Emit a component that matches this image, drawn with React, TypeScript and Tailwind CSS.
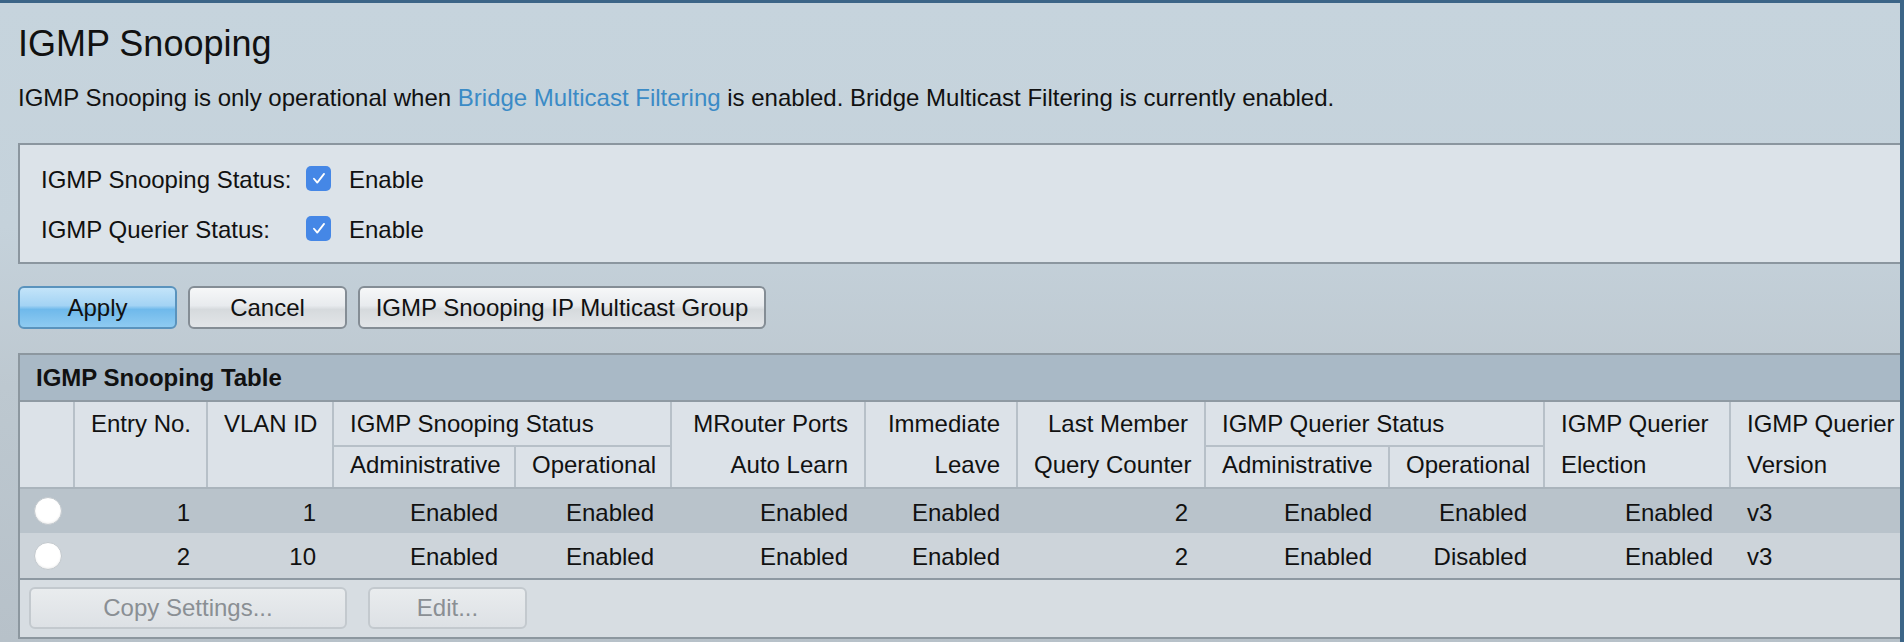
import type { ReactNode } from 'react'

const COLS = 'grid-cols-[53px_131px_124px_180px_154px_192px_150px_186px_182px_153px_184px_200px]'
const HEAD = 'whitespace-nowrap bg-[#dce2e8] px-4'

type Row = {
  entry: string
  vlan: string
  snoopAdmin: string
  snoopOper: string
  mrouter: string
  immediate: string
  lastMember: string
  querierAdmin: string
  querierOper: string
  election: string
  version: string
}

const ROWS: Row[] = [
  {
    entry: '1',
    vlan: '1',
    snoopAdmin: 'Enabled',
    snoopOper: 'Enabled',
    mrouter: 'Enabled',
    immediate: 'Enabled',
    lastMember: '2',
    querierAdmin: 'Enabled',
    querierOper: 'Enabled',
    election: 'Enabled',
    version: 'v3',
  },
  {
    entry: '2',
    vlan: '10',
    snoopAdmin: 'Enabled',
    snoopOper: 'Enabled',
    mrouter: 'Enabled',
    immediate: 'Enabled',
    lastMember: '2',
    querierAdmin: 'Enabled',
    querierOper: 'Disabled',
    election: 'Enabled',
    version: 'v3',
  },
]

function Checkbox() {
  return (
    <span className="flex h-[25px] w-[25px] items-center justify-center rounded-[5px] bg-[#4587e6]">
      <svg viewBox="0 0 24 24" className="h-[22px] w-[22px]" fill="none">
        <path d="M6.5 12.8l3.6 4.2L17.5 7.5" stroke="white" strokeWidth="2" strokeLinecap="round" strokeLinejoin="round" />
      </svg>
    </span>
  )
}

function StatusRow({ label }: { label: string }) {
  return (
    <div className="flex h-[50px] items-center pl-[21px]">
      <span className="w-[265px] pt-[3px]">{label}</span>
      <Checkbox />
      <span className="ml-[18px] pt-[3px]">Enable</span>
    </div>
  )
}

function Button({ children, primary = false, className = '' }: { children: ReactNode; primary?: boolean; className?: string }) {
  return (
    <button
      className={`h-[43px] rounded-[6px] border-2 text-[24px] leading-none text-[#111] ${
        primary
          ? 'border-[#5a93bd] bg-[linear-gradient(to_bottom,#c3e4f9_0%,#a3d3f4_45%,#6fb9eb_55%,#8fcbf1_100%)]'
          : 'border-[#848d95] bg-[linear-gradient(to_bottom,#f6f7f8_0%,#e8ebee_45%,#d6dadd_55%,#e2e5e8_100%)]'
      } ${className}`}
    >
      {children}
    </button>
  )
}

function DisabledButton({ children, className = '' }: { children: ReactNode; className?: string }) {
  return (
    <button
      disabled
      className={`h-[42px] rounded-[6px] border-2 border-[#c3c9ce] bg-[linear-gradient(to_bottom,#e9ecee,#dde1e5)] text-[24px] leading-none text-[#8a8f94] ${className}`}
    >
      {children}
    </button>
  )
}

function Radio() {
  return <span className="block h-[28px] w-[28px] rounded-full border border-[#c2c8cd] bg-white shadow-[inset_0_-1px_2px_rgba(0,0,0,0.08)]" />
}

export default function App() {
  return (
    <div className="h-[642px] w-full overflow-hidden border-t-[3px] border-r-[4px] border-[#3c6587] bg-[linear-gradient(180deg,#c6d4dd_0%,#c5d2db_35%,#bdc8d0_60%,#b7c1c9_100%)] pl-[18px] pt-[20px] font-['Liberation_Sans',Arial,Helvetica,sans-serif] text-[#111]">
      <h1 className="text-[36px] leading-[42px]">IGMP Snooping</h1>
      <p className="mt-[19px] text-[24px] leading-[28px]">
        IGMP Snooping is only operational when <span className="text-[#3b8bc6]">Bridge Multicast Filtering</span> is enabled.
        Bridge Multicast Filtering is currently enabled.
      </p>

      <div className="mt-[31px] border-y-2 border-l-2 border-[#8b969f] bg-[#dce3e9] pb-[9px] pt-[8px] text-[24px] leading-[28px]">
        <StatusRow label="IGMP Snooping Status:" />
        <StatusRow label="IGMP Querier Status:" />
      </div>

      <div className="mt-[22px] flex gap-[11px]">
        <Button primary className="w-[159px]">
          Apply
        </Button>
        <Button className="w-[159px]">Cancel</Button>
        <Button className="w-[408px]">IGMP Snooping IP Multicast Group</Button>
      </div>

      <div className="mt-[24px] w-[1913px] border-2 border-[#8c979f] text-[24px]">
        <div className="flex h-[47px] items-center border-b-2 border-[#8f9aa3] bg-[#a9b9c6] pl-4 font-bold leading-[28px]">
          IGMP Snooping Table
        </div>

        <div className={`grid ${COLS} h-[87px] grid-rows-[43px_40px] gap-[2px] border-b-2 border-[#aab4bc] bg-[#b7c0c8]`}>
          <div className="row-span-2 bg-[#dce2e8]" />
          <div className={`${HEAD} row-span-2 pt-px text-right leading-[41px]`}>Entry No.</div>
          <div className={`${HEAD} row-span-2 pt-px text-right leading-[41px]`}>VLAN ID</div>
          <div className={`${HEAD} col-span-2 pt-px leading-[41px]`}>IGMP Snooping Status</div>
          <div className={`${HEAD} row-span-2 pt-px text-right leading-[41px]`}>
            MRouter Ports
            <br />
            Auto Learn
          </div>
          <div className={`${HEAD} row-span-2 pt-px text-right leading-[41px]`}>
            Immediate
            <br />
            Leave
          </div>
          <div className={`${HEAD} row-span-2 pt-px text-right leading-[41px]`}>
            Last Member
            <br />
            Query Counter
          </div>
          <div className={`${HEAD} col-span-2 pt-px leading-[41px]`}>IGMP Querier Status</div>
          <div className={`${HEAD} row-span-2 pt-px leading-[41px]`}>
            IGMP Querier
            <br />
            Election
          </div>
          <div className={`${HEAD} row-span-2 pt-px leading-[41px]`}>
            IGMP Querier
            <br />
            Version
          </div>
          <div className={`${HEAD} col-start-4 row-start-2 leading-[36px]`}>Administrative</div>
          <div className={`${HEAD} col-start-5 row-start-2 leading-[36px]`}>Operational</div>
          <div className={`${HEAD} col-start-9 row-start-2 leading-[36px]`}>Administrative</div>
          <div className={`${HEAD} col-start-10 row-start-2 leading-[36px]`}>Operational</div>
        </div>

        {ROWS.map((r, i) => (
          <div
            key={r.entry}
            className={`grid ${COLS} items-center gap-x-[2px] leading-[28px] ${
              i === 0 ? 'h-[44px] bg-[#b9c3cb]' : 'h-[45px] bg-[#cdd4da]'
            }`}
          >
            <div className="pl-[14px]">
              <Radio />
            </div>
            <div className="px-4 pt-[3px] text-right">{r.entry}</div>
            <div className="px-4 pt-[3px] text-right">{r.vlan}</div>
            <div className="px-4 pt-[3px] text-right">{r.snoopAdmin}</div>
            <div className="px-4 pt-[3px] text-right">{r.snoopOper}</div>
            <div className="px-4 pt-[3px] text-right">{r.mrouter}</div>
            <div className="px-4 pt-[3px] text-right">{r.immediate}</div>
            <div className="px-4 pt-[3px] text-right">{r.lastMember}</div>
            <div className="px-4 pt-[3px] text-right">{r.querierAdmin}</div>
            <div className="px-4 pt-[3px] text-right">{r.querierOper}</div>
            <div className="px-4 pt-[3px] text-right">{r.election}</div>
            <div className="px-4 pt-[3px]">{r.version}</div>
          </div>
        ))}

        <div className="flex h-[59px] gap-[21px] border-t-2 border-[#8e99a2] bg-[#d7dde2] pl-[9px] pt-[7px]">
          <DisabledButton className="w-[318px]">Copy Settings...</DisabledButton>
          <DisabledButton className="w-[159px]">Edit...</DisabledButton>
        </div>
      </div>
    </div>
  )
}
